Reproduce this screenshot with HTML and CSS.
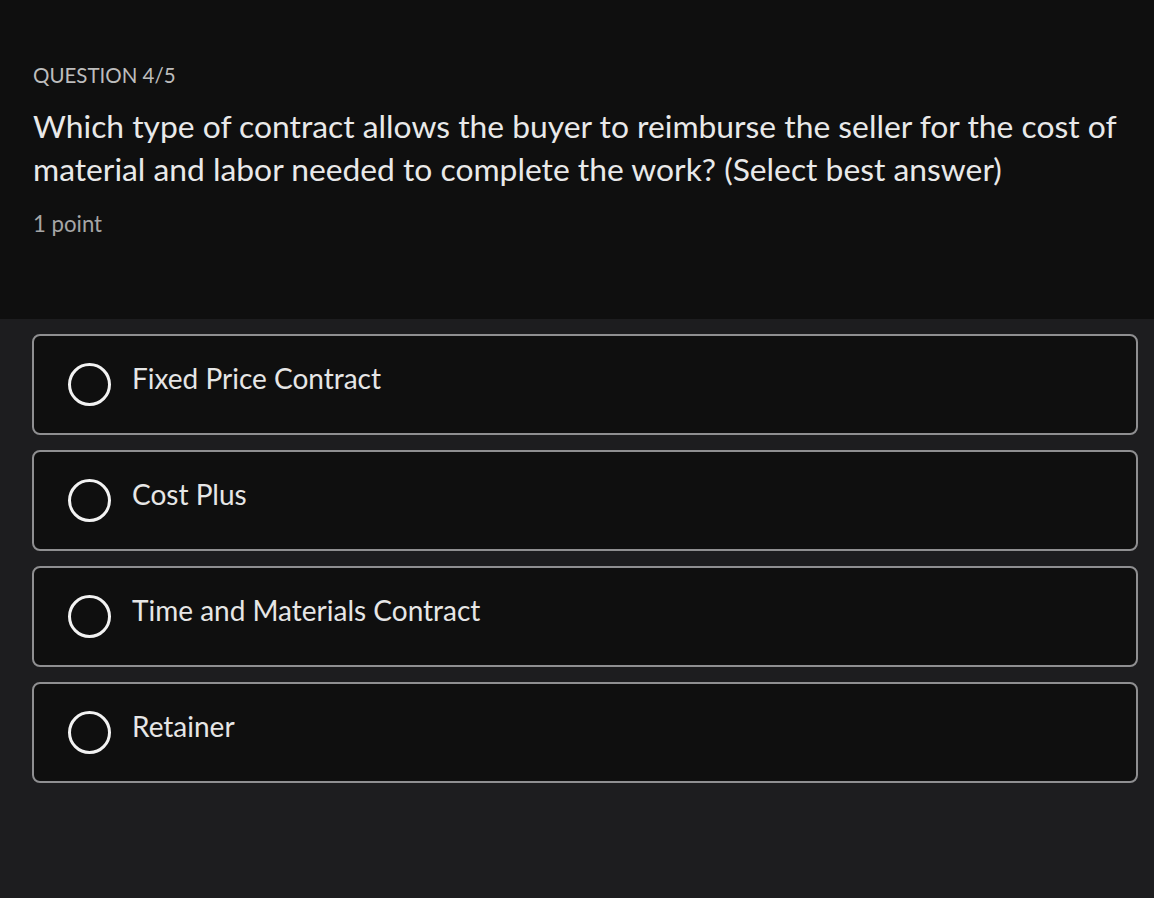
FILE: index.html
```html
<!DOCTYPE html>
<html lang="en">
<head>
  <meta charset="UTF-8">
  <meta name="viewport" content="width=device-width, initial-scale=1.0">
  <title>Question 4/5</title>
  <link rel="stylesheet" href="styles.css">
</head>
<body>

<div class="question-head">
  <div class="question-count">QUESTION 4/5</div>
  <div class="question-text">Which type of contract allows the buyer to reimburse the seller for the cost of material and labor needed to complete the work? (Select best answer)</div>
  <div class="question-points">1 point</div>
</div>

<div class="options">
  <label class="option">
    <span class="radio"></span>
    <span class="option-text">Fixed Price Contract</span>
  </label>
  <label class="option">
    <span class="radio"></span>
    <span class="option-text">Cost Plus</span>
  </label>
  <label class="option">
    <span class="radio"></span>
    <span class="option-text">Time and Materials Contract</span>
  </label>
  <label class="option">
    <span class="radio"></span>
    <span class="option-text">Retainer</span>
  </label>
</div>

</body>
</html>
```

FILE: styles.css
```css
body {
  margin: 0;
  padding: 0;
  background-color: #1d1d1f;
  font-family: Lato, "Open Sans", sans-serif;
  color: #ececec;
}

.question-head {
  background-color: #0f0f0f;
  height: 319px;
  box-sizing: border-box;
  padding: 60px 20px 0 33px;
}

.question-count {
  font-size: 20.5px;
  color: #bdbdbd;
  line-height: 30px;
}

.question-text {
  margin-top: 15px;
  font-size: 31.8px;
  line-height: 43px;
  color: #e9e9e9;
}

.question-points {
  margin-top: 19px;
  font-size: 22.2px;
  line-height: 28px;
  color: #a6a6a6;
}

.options {
  display: flex;
  flex-direction: column;
  gap: 15px;
  padding: 15px 16px 0 32px;
}

.option {
  display: flex;
  align-items: center;
  height: 101px;
  box-sizing: border-box;
  border: 2px solid #8f8f91;
  border-radius: 8px;
  background-color: #0f0f0f;
  padding-left: 34px;
  cursor: pointer;
}

.radio {
  width: 43px;
  height: 43px;
  box-sizing: border-box;
  border: 3px solid #f2f2f2;
  border-radius: 50%;
  flex-shrink: 0;
}

.option-text {
  margin-left: 21px;
  font-size: 28px;
  color: #e6e6e6;
  padding-bottom: 14px;
}
```
